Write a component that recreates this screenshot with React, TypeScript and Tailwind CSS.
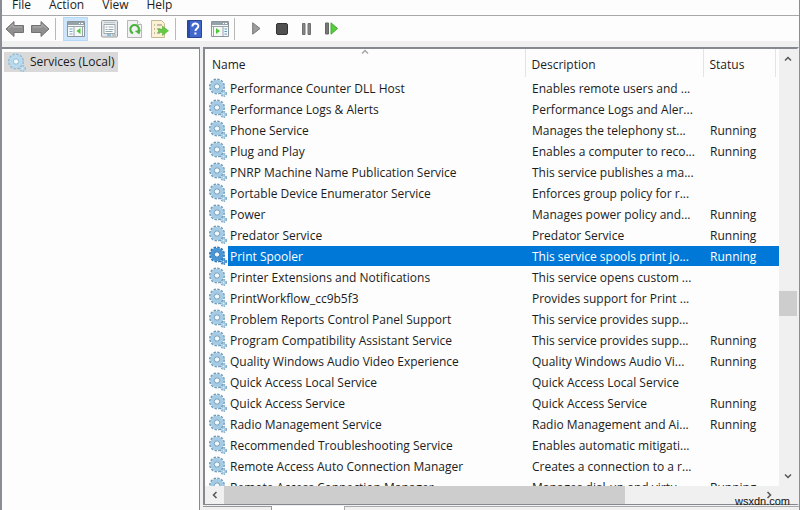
import React from "react";

type Service = { name: string; description: string; running?: boolean; selected?: boolean };

const services: Service[] = [
  { name: "Performance Counter DLL Host", description: "Enables remote users and ..." },
  { name: "Performance Logs & Alerts", description: "Performance Logs and Aler..." },
  { name: "Phone Service", description: "Manages the telephony st...", running: true },
  { name: "Plug and Play", description: "Enables a computer to reco...", running: true },
  { name: "PNRP Machine Name Publication Service", description: "This service publishes a ma..." },
  { name: "Portable Device Enumerator Service", description: "Enforces group policy for r..." },
  { name: "Power", description: "Manages power policy and...", running: true },
  { name: "Predator Service", description: "Predator Service", running: true },
  { name: "Print Spooler", description: "This service spools print jo...", running: true, selected: true },
  { name: "Printer Extensions and Notifications", description: "This service opens custom ..." },
  { name: "PrintWorkflow_cc9b5f3", description: "Provides support for Print ..." },
  { name: "Problem Reports Control Panel Support", description: "This service provides supp..." },
  { name: "Program Compatibility Assistant Service", description: "This service provides supp...", running: true },
  { name: "Quality Windows Audio Video Experience", description: "Quality Windows Audio Vi...", running: true },
  { name: "Quick Access Local Service", description: "Quick Access Local Service" },
  { name: "Quick Access Service", description: "Quick Access Service", running: true },
  { name: "Radio Management Service", description: "Radio Management and Ai...", running: true },
  { name: "Recommended Troubleshooting Service", description: "Enables automatic mitigati..." },
  { name: "Remote Access Auto Connection Manager", description: "Creates a connection to a r..." },
  { name: "Remote Access Connection Manager", description: "Manages dial-up and virtu...", running: true },
];

function Gears({ selected = false, pale = false }: { selected?: boolean; pale?: boolean }) {
  const body = selected ? "#4a97d6" : pale ? "#b9d9ec" : "#a6cbe4";
  const edge = selected ? "#2a74b5" : pale ? "#8dbbd6" : "#6f9cba";
  return (
    <svg width="18" height="19" viewBox="0 0 18 19" className="shrink-0" aria-hidden="true">
      <circle cx="8" cy="8.5" r="7" fill="none" stroke={edge} strokeWidth="2" strokeDasharray="2.4 1.265" />
      <circle cx="8" cy="8.5" r="4.7" fill="none" stroke={body} strokeWidth="4" />
      <circle cx="8" cy="8.5" r="2.7" fill="#f4f9fc" stroke={edge} strokeWidth="1" />
      <circle cx="14.5" cy="15.5" r="2.6" fill="none" stroke={edge} strokeWidth="1.6" strokeDasharray="1.4 1.02" />
      <circle cx="14.5" cy="15.5" r="1.5" fill="#e4f0f7" stroke={body} strokeWidth="1.4" />
    </svg>
  );
}

function Arrow({ flip = false }: { flip?: boolean }) {
  return (
    <svg width="20" height="18" viewBox="0 0 20 18" className={flip ? "-scale-x-100" : ""} aria-hidden="true">
      <path d="M1 9 9 1.5V5.5h9.5v7H9v4z" fill="#8f8f8f" stroke="#727272" strokeLinejoin="round" />
      <path d="M3 9 8 4.5V7h9" fill="none" stroke="#b0b0b0" />
    </svg>
  );
}

function TreeIcon() {
  return (
    <svg width="18" height="16" viewBox="0 0 18 16" aria-hidden="true">
      <path d="M.5.5h17v15H.5z" fill="#f7f8f8" stroke="#8b959b" />
      <path d="M1 1h16v3H1z" fill="#94a2aa" />
      <path d="M12 2.5h1m1 0h2" stroke="#fff" />
      <path d="M1 5.5h16M7 6v9" stroke="#9aa5ab" />
      <path d="M2.5 8h3m-3 2.5h3m-3 2.5h3" stroke="#7fa9c2" />
      <path d="M13.5 7v6L9.500 10z" fill="#4cc935" />
      <path d="M15.500 6v9" stroke="#9aa5ab" />
    </svg>
  );
}

function PropertiesIcon() {
  return (
    <svg width="17" height="18" viewBox="0 0 17 18" aria-hidden="true">
      <rect x=".5" y=".5" width="16" height="16.5" rx="1" fill="#e3e7e9" stroke="#949da2" />
      <path d="M3 2.5h11" stroke="#bcc5ca" />
      <path d="M3 4.5h11v9H3z" fill="#fff" stroke="#9ca9af" />
      <path d="M4.5 7h2m1 0h5m-8 2.5h2m1 0h5m-8 2h7" stroke="#91a5b0" />
      <path d="M6 15h4" stroke="#4a93c0" />
      <path d="M11 15h4" stroke="#9aa5ab" />
    </svg>
  );
}

function RefreshIcon() {
  return (
    <svg width="15" height="18" viewBox="0 0 15 18" aria-hidden="true">
      <path d="M.5.5h10l4 4v13H.5z" fill="#f3f1f4" stroke="#b7b7b7" />
      <path d="M10.5.5v4h4" fill="#fff" stroke="#b7b7b7" />
      <path d="M6 13.300A4.3 4.3 0 1 1 11.6 11" fill="none" stroke="#4ab53c" strokeWidth="2.200" />
      <path d="m13.800 9.500-1.500 5-4.500-3.500z" fill="#4ab53c" />
    </svg>
  );
}

function ExportIcon() {
  return (
    <svg width="18" height="18" viewBox="0 0 18 18" aria-hidden="true">
      <path d="M.5.5h10l3 3v14H.5z" fill="#fbf2d4" stroke="#c6b997" />
      <path d="M3 5h1m2 0h5M3 9h1m2 0h3m-6 4h1m2 0h3" stroke="#8b8576" />
      <path d="M7.5 9h4V6l6 4.8-6 4.7v-3h-4z" fill="#65ca45" stroke="#4aad32" strokeWidth=".5" />
    </svg>
  );
}

function HelpIcon() {
  return (
    <svg width="15" height="18" viewBox="0 0 15 18" aria-hidden="true">
      <path d="M.5.5h14v17H.5z" fill="#4268cc" stroke="#294593" />
      <path d="M1 1h2v16H1z" fill="#294da9" />
      <path d="M5.4 6.4c0-3.8 6-3.8 6-.3 0 2.5-3 2.4-3 5" fill="none" stroke="#fff" strokeWidth="1.9" />
      <path d="M7.4 12.5h2v2h-2z" fill="#fff" />
    </svg>
  );
}

function ActionPaneIcon() {
  return (
    <svg width="18" height="16" viewBox="0 0 18 16" aria-hidden="true">
      <path d="M.5.5h17v15H.5z" fill="#f7f8f8" stroke="#8b959b" />
      <path d="M1 1h16v3H1z" fill="#94a2aa" />
      <path d="M12 2.5h1m1 0h2" stroke="#fff" />
      <path d="M1 5.5h16M12 6v9" stroke="#9aa5ab" />
      <path d="M13.5 8h2.5m-2.5 2.5h2.5m-2.5 2.5h2.5" stroke="#4d9ccb" />
      <path d="M5 7v6l4-3z" fill="#4cc935" />
      <path d="M2.500 6v9" stroke="#9aa5ab" />
    </svg>
  );
}

function Chevron({ className = "" }: { className?: string }) {
  return (
    <svg width="8" height="6" viewBox="0 0 8 6" className={className} aria-hidden="true">
      <path d="m1 4.5 3-3 3 3" fill="none" stroke="#555" strokeWidth="1.5" />
    </svg>
  );
}

function ToolButton({ label, active, children }: { label: string; active?: boolean; children: React.ReactNode }) {
  return (
    <button
      aria-label={label}
      title={label}
      className={
        "flex h-6 w-[25px] shrink-0 items-center justify-center border " +
        (active ? "border-[#b3d9f7] bg-[#cce5fa]" : "border-transparent")
      }
    >
      {children}
    </button>
  );
}

const Divider = () => <span className="h-[22px] w-px shrink-0 bg-[#b9b9b9]" />;

export default function App() {
  return (
    <div className="relative flex h-screen flex-col overflow-hidden border-r border-l-2 border-[#8a8d94] bg-[#f0f0f0] font-['Open_Sans','Noto_Sans',sans-serif] text-[12px] text-[#1c1c1c]">
      <nav className="flex h-4 shrink-0 items-end gap-[18px] overflow-hidden border-b border-[#a8a8a8] bg-[#fdfdfd] pb-px pl-[10px] leading-[18px]">
        <button>File</button>
        <button>Action</button>
        <button>View</button>
        <button>Help</button>
      </nav>

      <div className="flex h-[25px] shrink-0 items-center bg-[#fdfdfd]" role="toolbar" aria-label="Tools">
        <ToolButton label="Back"><Arrow /></ToolButton>
        <ToolButton label="Forward"><Arrow flip /></ToolButton>
        <div className="flex items-center gap-[7px] pl-[3px]">
          <Divider />
          <ToolButton label="Show console tree" active><TreeIcon /></ToolButton>
        </div>
        <div className="flex items-center pl-[9px]">
          <ToolButton label="Properties"><PropertiesIcon /></ToolButton>
          <ToolButton label="Refresh"><RefreshIcon /></ToolButton>
          <ToolButton label="Export list"><ExportIcon /></ToolButton>
        </div>
        <div className="flex items-center pl-[3px]">
          <Divider />
          <span className="w-[6px]" />
          <ToolButton label="Help topics"><HelpIcon /></ToolButton>
          <ToolButton label="Show action pane"><ActionPaneIcon /></ToolButton>
          <span className="w-[2px]" />
          <Divider />
        </div>
        <div className="flex items-center pl-[9px]">
          <ToolButton label="Start service">
            <svg width="9" height="13" viewBox="0 0 9 13"><path d="M.7.8 8 6.5.7 12.2z" fill="#9d9d9d" stroke="#777" /></svg>
          </ToolButton>
          <ToolButton label="Stop service">
            <span className="size-3 rounded-[2px] border border-[#333] bg-[#505050]" />
          </ToolButton>
          <ToolButton label="Pause service">
            <svg width="9" height="12" viewBox="0 0 9 12"><path d="M.5.5h2.5v11H.5zm5.5 0h2.5v11H6z" fill="#858585" stroke="#707070" /></svg>
          </ToolButton>
          <ToolButton label="Restart service">
            <svg width="13" height="13" viewBox="0 0 13 13"><path d="M.5 1h3v11h-3z" fill="#777" stroke="#666" /><path d="m6 .8 6.5 5.7L6 12.2z" fill="#55cd3d" stroke="#45ae32" /></svg>
          </ToolButton>
        </div>
      </div>

      <main className="flex min-h-0 flex-1 pt-[6px]">
        <aside className="w-[198px] shrink-0 border-t-2 border-r border-[#85898f] bg-[#fdfdfd] pt-[3px] pl-[2px]">
          <button className="flex h-5 w-[114px] items-center gap-1 bg-[#d9d9d9] pl-[4px] whitespace-nowrap">
            <Gears pale />
            <span>Services (Local)</span>
          </button>
        </aside>

        <section className="ml-[3px] flex min-w-0 flex-1 flex-col">
          <div className="flex min-h-0 flex-1 flex-col border-t-2 border-r-2 border-b border-l-2 border-[#85898f] border-r-[#f0f0f0] bg-[#fdfdfd]">
            <div className="flex min-h-0 flex-1">
              <div className="min-w-0 flex-1 overflow-hidden">
                <table className="w-full table-fixed border-collapse text-left">
                  <colgroup>
                    <col />
                    <col className="w-[178px]" />
                    <col className="w-[72px]" />
                    <col className="w-[4px]" />
                  </colgroup>
                  <thead>
                    <tr className="h-7">
                      <th className="relative p-0 pt-[3px] pl-[7px] font-normal">
                        Name
                        <Chevron className="absolute top-0 left-1/2 -translate-x-1/2 opacity-50" />
                      </th>
                      <th className="border-l border-[#e4e4e4] p-0 pt-[3px] pl-[6px] font-normal">Description</th>
                      <th className="border-x border-[#e4e4e4] p-0 pt-[3px] pl-[6px] font-normal">
                        Status
                      </th>
                      <td />
                    </tr>
                  </thead>
                  <tbody>
                    {services.map((s) => (
                      <tr key={s.name} className={"h-[21px] leading-[18px] whitespace-nowrap " + (s.selected ? "text-white" : "")}>
                        <td className="p-0">
                          <div className="flex h-[21px] items-center gap-px pl-1">
                            <Gears selected={s.selected} />
                            <span className={"h-5 flex-1 pt-[2px] pl-[2px] " + (s.selected ? "bg-[#0078d7]" : "")}>{s.name}</span>
                          </div>
                        </td>
                        <td className="p-0">
                          <div className={"h-5 pt-[2px] pl-[7px] " + (s.selected ? "bg-[#0078d7]" : "")}>{s.description}</div>
                        </td>
                        <td className="p-0" colSpan={2}>
                          <div className={"h-5 pt-[2px] pl-[7px] " + (s.selected ? "bg-[#0078d7]" : "")}>{s.running ? "Running" : ""}</div>
                        </td>
                      </tr>
                    ))}
                  </tbody>
                </table>
              </div>
              <div className="flex w-[18px] shrink-0 flex-col items-center bg-[#f0f0f0]">
                <button aria-label="Scroll up" className="flex h-5 w-full items-center justify-center"><Chevron /></button>
                <div className="flex w-full flex-1 flex-col">
                  <span className="flex-[222]" />
                  <span className="h-[25px] bg-[#cdcdcd]" />
                  <span className="flex-[150]" />
                </div>
                <button aria-label="Scroll down" className="flex h-5 w-full items-center justify-center"><Chevron className="rotate-180" /></button>
              </div>
            </div>
            <div className="flex h-[18px] shrink-0 bg-[#f0f0f0]">
              <button aria-label="Scroll left" className="flex w-[19px] items-center justify-center"><Chevron className="-rotate-90" /></button>
              <div className="flex flex-1"><span className="w-3/4 bg-[#cdcdcd]" /></div>
              <button aria-label="Scroll right" className="mr-[18px] flex w-5 items-center justify-center"><Chevron className="rotate-90" /></button>
            </div>
          </div>
          <div className="flex h-[5px] shrink-0 pt-px" role="tablist" aria-label="View">
            <button role="tab" aria-label="Extended" className="w-[69px] border-t border-r border-[#999]" />
            <button role="tab" aria-label="Standard" aria-selected="true" className="w-[72px] bg-white" />
            <span className="flex-1 border-t border-l border-[#aaa]" />
          </div>
        </section>
      </main>
      <span className="absolute right-[9px] bottom-0 font-['Liberation_Sans',Arial,sans-serif] text-[11px] leading-[18px] text-[#111]">wsxdn.com</span>
    </div>
  );
}
